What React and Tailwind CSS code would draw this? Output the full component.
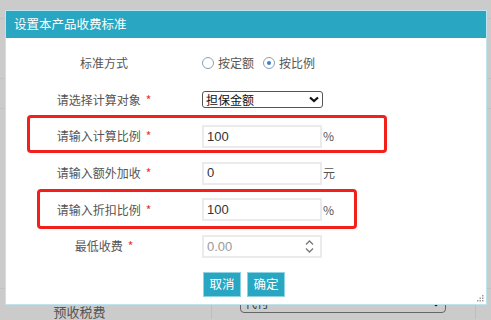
import React, { useState } from "react";

const FONT = "font-['Microsoft_YaHei','Noto_Sans_CJK_SC',sans-serif]";

const Label = ({ children, required }) => (
  <div className="w-[196px] text-center text-[12px] text-[#555]">
    {children}
    {required && <span className="ml-[5px] text-[#f23030]">*</span>}
  </div>
);

const TextInput = ({ value, placeholder, suffix, spinner }) => (
  <div className="flex items-center">
    <div className="relative flex h-[23px] w-[120px] items-center border-2 border-[#ebebeb] bg-white">
      <span
        className={`pl-[3px] font-['Liberation_Sans',sans-serif] text-[13px] ${
          value ? "text-[#333]" : "text-[#999]"
        }`}
      >
        {value || placeholder}
      </span>
      {spinner && (
        <svg
          className="absolute right-[6px] top-[2px]"
          width="9"
          height="15"
          viewBox="0 0 9 15"
          fill="none"
          stroke="#777"
          strokeWidth="1.3"
        >
          <path d="M1 5.5 L4.5 2 L8 5.5" />
          <path d="M1 9.5 L4.5 13 L8 9.5" />
        </svg>
      )}
    </div>
    {suffix && <span className="ml-[1px] text-[12px] text-[#555]">{suffix}</span>}
  </div>
);

const Radio = ({ checked, label, onClick }) => (
  <label className="mr-[9px] flex cursor-pointer items-center" onClick={onClick}>
    <span className="flex h-[12px] w-[12px] items-center justify-center rounded-full border border-[#8b9fb3] bg-white">
      {checked && <span className="h-[4px] w-[4px] rounded-full bg-[#3b7fd4]" />}
    </span>
    <span className="ml-[4px] text-[12px] text-[#555]">{label}</span>
  </label>
);

const App = () => {
  const [mode, setMode] = useState("ratio");

  return (
    <div className={`relative h-[320px] w-[491px] overflow-hidden bg-[#cbcbcb] ${FONT}`}>
      {/* page behind the overlay */}
      <div className="flex h-full flex-col">
        <div className="h-[19px] border-b border-[#c2c2c2]" />
        <div className="h-[60px] border-b border-[#c2c2c2]" />
        <div className="h-[30px] border-b border-[#c2c2c2]" />
        <div className="h-[180px] border-b border-[#c2c2c2]" />
        <div className="flex h-[30px] items-end">
          <div className="flex h-full w-[212px] items-end justify-center border-r border-[#bdbdbd] pb-[1px] pr-[52px]">
            <span className="text-[13px] leading-none text-[#555]">预收税费</span>
          </div>
          <div className="flex h-full flex-1 items-end border-r border-[#bdbdbd] pl-[28px] pr-[28px]">
            <div className="mb-[6px] flex h-[20px] w-[206px] items-center justify-between rounded-sm border border-[#666] px-[4px]">
              <span className="text-[12px] text-[#333]">代付</span>
              <svg width="10" height="7" viewBox="0 0 10 7" fill="none" stroke="#111" strokeWidth="2.2">
                <path d="M1 1.5 L5 5 L9 1.5" />
              </svg>
            </div>
          </div>
          <div className="w-[15px]" />
        </div>
      </div>

      {/* dialog */}
      <div className="absolute left-[5px] top-[10px] flex h-[295px] w-[482px] flex-col border border-[#bfe4ee] bg-white">
        <div className="flex h-[27px] items-center bg-[#29a6c1] pl-[8px] text-[12.5px] text-white">
          设置本产品收费标准
        </div>
        <div className="flex flex-col pt-[7px]">
          <div className="flex h-[36.6px] items-center">
            <Label>标准方式</Label>
            <Radio checked={mode === "amount"} label="按定额" onClick={() => setMode("amount")} />
            <Radio checked={mode === "ratio"} label="按比例" onClick={() => setMode("ratio")} />
          </div>
          <div className="flex h-[36.6px] items-center">
            <Label required>请选择计算对象</Label>
            <div className="flex h-[17px] w-[121px] items-center justify-between rounded-[3px] border border-[#555] px-[3px]">
              <span className="text-[12px] leading-none text-[#111]">担保金额</span>
              <svg width="10" height="7" viewBox="0 0 10 7" fill="none" stroke="#111" strokeWidth="2.2">
                <path d="M1 1.5 L5 5 L9 1.5" />
              </svg>
            </div>
          </div>
          <div className="flex h-[36.6px] items-center">
            <Label required>请输入计算比例</Label>
            <TextInput value="100" suffix="%" />
          </div>
          <div className="flex h-[36.6px] items-center">
            <Label required>请输入额外加收</Label>
            <TextInput value="0" suffix="元" />
          </div>
          <div className="flex h-[36.6px] items-center">
            <Label required>请输入折扣比例</Label>
            <TextInput value="100" suffix="%" />
          </div>
          <div className="flex h-[36.6px] items-center">
            <Label required>最低收费</Label>
            <TextInput placeholder="0.00" spinner />
          </div>
          <div className="mt-[7px] flex pl-[197px]">
            <button className="h-[25px] w-[38px] border border-[#8fd3e3] bg-[#29a6c1] text-[12.5px] text-white">
              取消
            </button>
            <button className="ml-[6px] h-[25px] w-[38px] border border-[#8fd3e3] bg-[#29a6c1] text-[12.5px] text-white">
              确定
            </button>
          </div>
        </div>

        {/* resize grip */}
        <svg className="absolute bottom-[2px] right-[2px]" width="7" height="7" viewBox="0 0 7 7" fill="#9a9a9a">
          <rect x="5" y="0" width="1.5" height="1.5" />
          <rect x="2.5" y="2.5" width="1.5" height="1.5" />
          <rect x="5" y="2.5" width="1.5" height="1.5" />
          <rect x="0" y="5" width="1.5" height="1.5" />
          <rect x="2.5" y="5" width="1.5" height="1.5" />
          <rect x="5" y="5" width="1.5" height="1.5" />
        </svg>

        {/* annotation boxes */}
        <div className="absolute left-[21px] top-[104px] h-[38px] w-[360px] rounded-[4px] border-[3px] border-[#f2201a]" />
        <div className="absolute left-[31px] top-[178px] h-[40px] w-[320px] rounded-[4px] border-[3px] border-[#f2201a]" />
      </div>
    </div>
  );
};

export default App;
